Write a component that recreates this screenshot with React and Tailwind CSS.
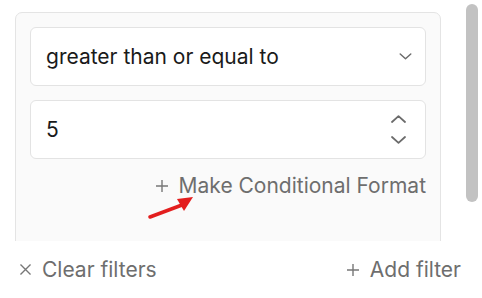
import React from "react";

function Chevron({ up, className }) {
  return (
    <svg viewBox="0 0 16 8" className={className} fill="none" stroke="#6b6b6b" strokeWidth="1.8" strokeLinecap="round" strokeLinejoin="round">
      {up ? <path d="M1.5 7 L8 1.2 L14.5 7" /> : <path d="M1.5 1 L8 6.8 L14.5 1" />}
    </svg>
  );
}

function Plus({ className }) {
  return (
    <svg viewBox="0 0 12 12" className={className} fill="none" stroke="#777" strokeWidth="1.4">
      <path d="M6 0 V12 M0 6 H12" />
    </svg>
  );
}

export default function App() {
  return (
    <div className="w-[482px] h-[298px] bg-white relative overflow-hidden font-['Inter',sans-serif]">
      <div className="h-[241px] overflow-hidden pl-[15px] pt-[12px] pr-[41px]">
        <div className="h-[260px] border border-[#e4e4e4] rounded-t-[7px] bg-[#fafafa] px-[14px] pt-[14px]">
          <div className="h-[59px] bg-white border border-[#e3e3e3] rounded-[6px] flex items-center justify-between pl-[15px] pr-[13px]">
            <span className="text-[21px] text-[#1a1a1a]">greater than or equal to</span>
            <Chevron className="w-[13px] h-[7px]" />
          </div>
          <div className="mt-[14px] h-[59px] bg-white border border-[#e3e3e3] rounded-[6px] flex items-center justify-between pl-[15px] pr-[18px]">
            <span className="text-[21px] text-[#1a1a1a]">5</span>
            <div className="flex flex-col gap-[13px]">
              <Chevron up className="w-[17px] h-[8px]" />
              <Chevron className="w-[17px] h-[8px]" />
            </div>
          </div>
          <div className="mt-[13px] flex justify-end items-center gap-[11px] text-[21px] leading-[28px] text-[#6e6e6e]">
            <Plus className="w-[12px] h-[12px]" />
            <span>Make Conditional Format</span>
          </div>
        </div>
      </div>
      <div className="h-[57px] flex items-center justify-between pl-[20px] pr-[21px] text-[21px] text-[#6e6e6e]">
        <div className="flex items-center gap-[11px]">
          <svg viewBox="0 0 12 12" className="w-[11px] h-[11px]" fill="none" stroke="#777" strokeWidth="1.5">
            <path d="M0.5 0.5 L11.5 11.5 M11.5 0.5 L0.5 11.5" />
          </svg>
          <span>Clear filters</span>
        </div>
        <div className="flex items-center gap-[11px]">
          <Plus className="w-[12px] h-[12px]" />
          <span>Add filter</span>
        </div>
      </div>
      <div className="absolute right-[4px] top-[4px] w-[12px] h-[198px] rounded-full bg-[#c2c2c2]" />
      <svg className="absolute left-[148px] top-[195px] w-[48px] h-[26px]" viewBox="0 0 48 26">
        <path d="M2 22 L34 10" stroke="#e31e1e" strokeWidth="3.5" strokeLinecap="round" />
        <polygon points="45,2 29,4 36,16" fill="#e31e1e" />
      </svg>
    </div>
  );
}
